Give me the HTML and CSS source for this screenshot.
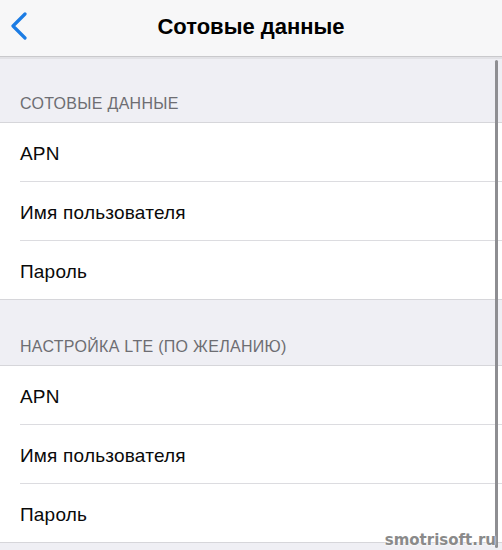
FILE: index.html
```html
<!DOCTYPE html>
<html lang="ru">
<head>
<meta charset="utf-8">
<title>Сотовые данные</title>
<link rel="stylesheet" href="styles.css">
</head>
<body>
<div class="screen">
  <header class="navbar">
    <span class="back">
      <svg width="18" height="28" viewBox="0 0 18 28"><path d="M15 2 L3 14 L15 26" fill="none" stroke="#1c7ce4" stroke-width="3.2" stroke-linecap="round" stroke-linejoin="round"/></svg>
    </span>
    <h1 class="title">Сотовые данные</h1>
  </header>
  <main class="content">
    <div class="section-title">СОТОВЫЕ ДАННЫЕ</div>
    <ul class="group">
      <li class="row">APN</li>
      <li class="row">Имя пользователя</li>
      <li class="row">Пароль</li>
    </ul>
    <div class="section-title">НАСТРОЙКА LTE (ПО ЖЕЛАНИЮ)</div>
    <ul class="group">
      <li class="row">APN</li>
      <li class="row">Имя пользователя</li>
      <li class="row">Пароль</li>
    </ul>
    <div class="scrollbar"></div>
    <div class="watermark">smotrisoft.ru</div>
  </main>
</div>
</body>
</html>
```
FILE: styles.css
```css
* { box-sizing: border-box; }
html, body { margin: 0; padding: 0; }
body {
  width: 502px;
  height: 550px;
  overflow: hidden;
  background: #efeff4;
  font-family: "Liberation Sans", Arial, sans-serif;
}
.screen { width: 502px; height: 550px; display: flex; flex-direction: column; }
.navbar {
  height: 57px;
  flex: none;
  background: #f7f7f8;
  border-bottom: 1px solid #c9c9cc;
  box-shadow: 0 2px 0 #e2e2e6;
  display: flex;
  align-items: center;
  justify-content: center;
  position: relative;
}
.back {
  position: absolute;
  left: 10px;
  top: 12px;
  display: flex;
}
.title {
  margin: 0 0 3px;
  font-size: 22px;
  font-weight: bold;
  color: #000;
}
.content { position: relative; flex: 1; }
.section-title {
  height: 65px;
  padding: 0 20px 9px;
  display: flex;
  align-items: flex-end;
  font-size: 16px;
  color: #6d6d72;
  letter-spacing: 0.3px;
}
.group {
  list-style: none;
  margin: 0;
  padding: 0 0 0 20px;
  background: #fff;
  border-top: 1px solid #d6d6da;
  border-bottom: 1px solid #d6d6da;
}
.row {
  height: 59px;
  padding-top: 3px;
  display: flex;
  align-items: center;
  font-size: 19px;
  letter-spacing: 0.2px;
  color: #0a0a0a;
  border-bottom: 1px solid #dcdce0;
}
.row:last-child { border-bottom: none; height: 58px; }
.scrollbar {
  position: absolute;
  right: 4px;
  top: 3px;
  width: 3px;
  height: 488px;
  background: #8e8e92;
  border-radius: 2px;
}
.watermark {
  position: absolute;
  right: 6px;
  bottom: 1px;
  font-family: "DejaVu Sans", sans-serif;
  font-weight: bold;
  font-size: 15px;
  color: #8a8a8a;
  text-shadow: 0 0 2px #fff, 0 0 2px #fff;
}
```
